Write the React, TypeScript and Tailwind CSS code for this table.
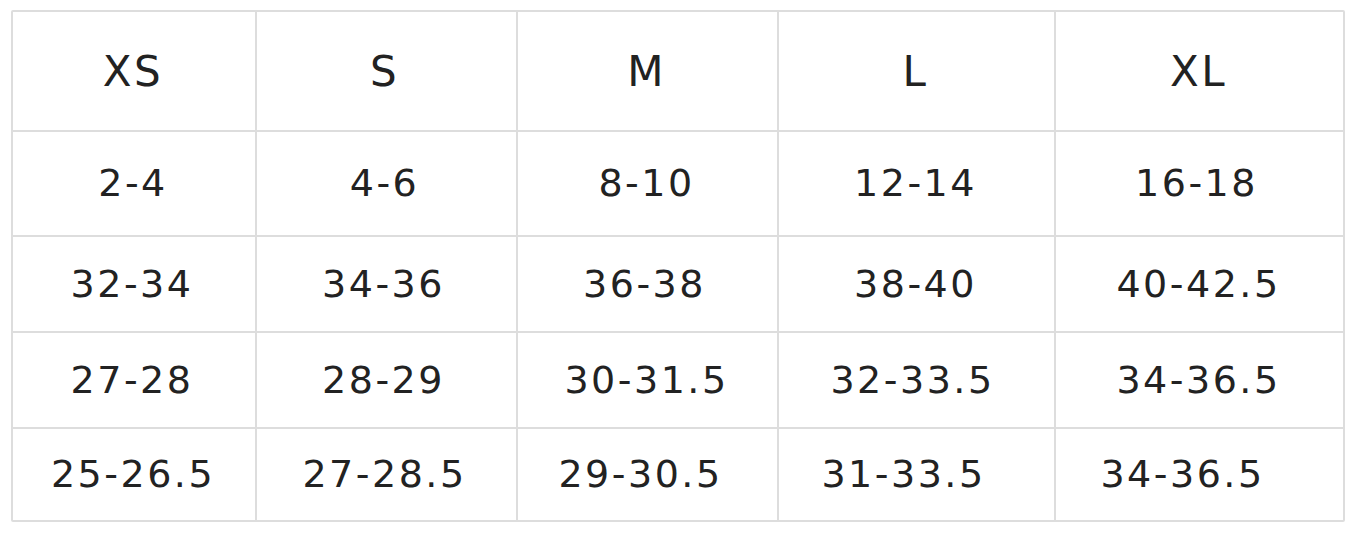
import React from 'react';

const rows = [
  ['XS', 'S', 'M', 'L', 'XL'],
  ['2-4', '4-6', '8-10', '12-14', '16-18'],
  ['32-34', '34-36', '36-38', '38-40', '40-42.5'],
  ['27-28', '28-29', '30-31.5', '32-33.5', '34-36.5'],
  ['25-26.5', '27-28.5', '29-30.5', '31-33.5', '34-36.5'],
];

// the bottom row sits a little to the left in the source chart
const shift = [
  ['pr-[2px]', 'pr-[4px]', 'pr-[2px]', 'pr-[2px]', 'pr-[2px]'],
  ['pr-[2px]', 'pr-[4px]', 'pr-[2px]', 'pr-[2px]', 'pr-[6px]'],
  ['pr-[4px]', 'pr-[6px]', 'pr-[6px]', 'pr-[2px]', 'pr-[2px]'],
  ['pr-[4px]', 'pr-[6px]', 'pr-[2px]', 'pr-[8px]', 'pr-[2px]'],
  ['pr-[2px]', 'pr-[4px]', 'pr-[14px]', 'pr-[26px]', 'pr-[34px]'],
];

const App = () => {
  return (
    <div className="w-[1354px] h-[534px] bg-white pt-[10px] pl-[11px]">
      {/* Size chart */}
      <div
        className="grid grid-cols-[242px_259px_259px_275px_287px] grid-rows-[118px_103px_94px_94px_91px] gap-[2px] p-[2px] bg-[#dddddd] w-[1334px] rounded-[2px]"
        style={{ fontFamily: '"DejaVu Sans", sans-serif' }}
      >
        {rows.map((row, r) =>
          row.map((cell, c) => (
            <div
              key={`${r}-${c}`}
              className={`bg-white flex items-center justify-center tracking-[2.5px] text-[#222222] ${r === 0 ? 'text-[42px]' : 'text-[38px]'} ${shift[r][c]}`}
            >
              {cell}
            </div>
          ))
        )}
      </div>
    </div>
  );
};

export default App;
